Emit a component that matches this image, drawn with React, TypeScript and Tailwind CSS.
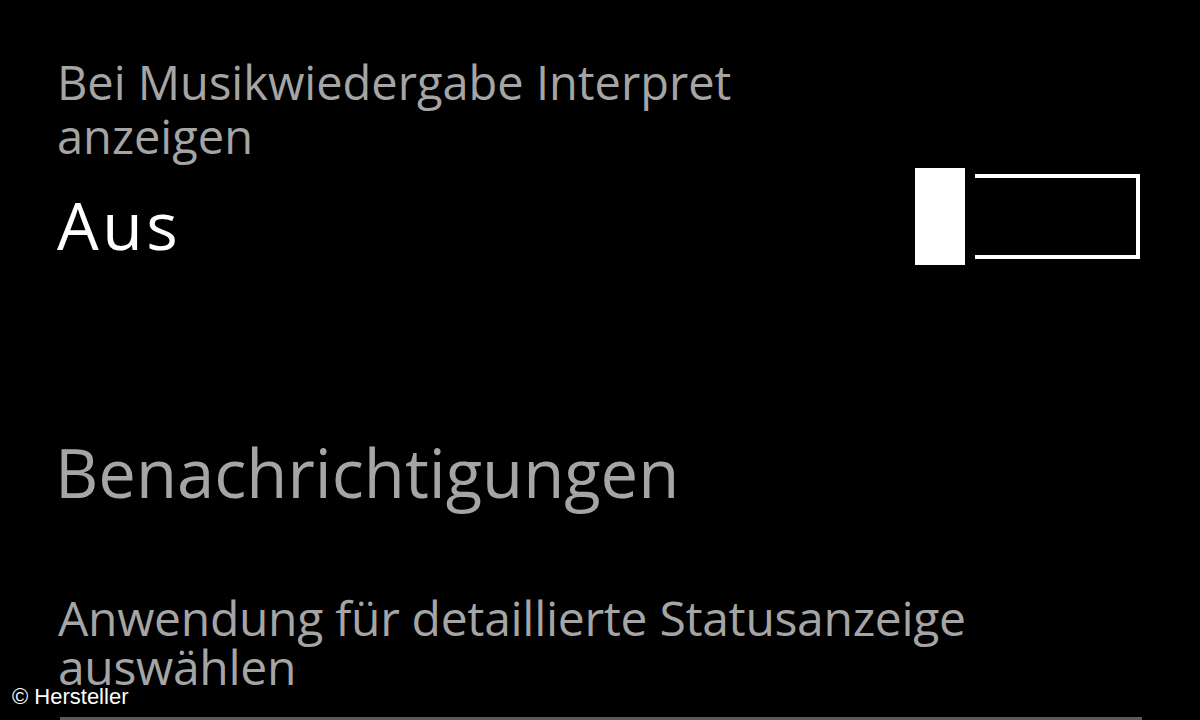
export default function App() {
  const font = { fontFamily: '"Open Sans", "Noto Sans", sans-serif' };
  return (
    <div className="w-[1200px] h-[720px] bg-black overflow-hidden relative flex flex-col" style={font}>
      <div className="flex flex-row pl-[57px] pr-[60px] pt-[55px]">
        <div className="flex flex-col flex-1">
          <div className="text-[47px] leading-[54px] text-[#a5a5a5]">
            Bei Musikwiedergabe Interpret<br />anzeigen
          </div>
          <div className="text-[66px] leading-[70px] text-white mt-[26px] tracking-[3.5px]">Aus</div>
        </div>
        <div className="flex flex-row items-center mt-[113px] h-[97px]">
          <div className="w-[50px] h-[97px] bg-white" />
          <div className="w-[165px] h-[85px] ml-[10px] border-[4px] border-white border-l-0" />
        </div>
      </div>
      <div className="pl-[55px] mt-[167px] text-[67px] leading-[80px] text-[#a5a5a5]">Benachrichtigungen</div>
      <div className="pl-[58px] mt-[81px] text-[48px] leading-[49px] text-[#a5a5a5] tracking-[-0.3px]">
        Anwendung für detaillierte Statusanzeige<br />auswählen
      </div>
      <div className="absolute left-[60px] right-[58px] bottom-0 h-[3px] bg-[#5a5a5a]" />
      <div className="absolute left-[12px] top-[684px] text-[22px] leading-[26px] text-white" style={{ fontFamily: '"Liberation Sans", Arial, sans-serif' }}>
        © Hersteller
      </div>
    </div>
  );
}
